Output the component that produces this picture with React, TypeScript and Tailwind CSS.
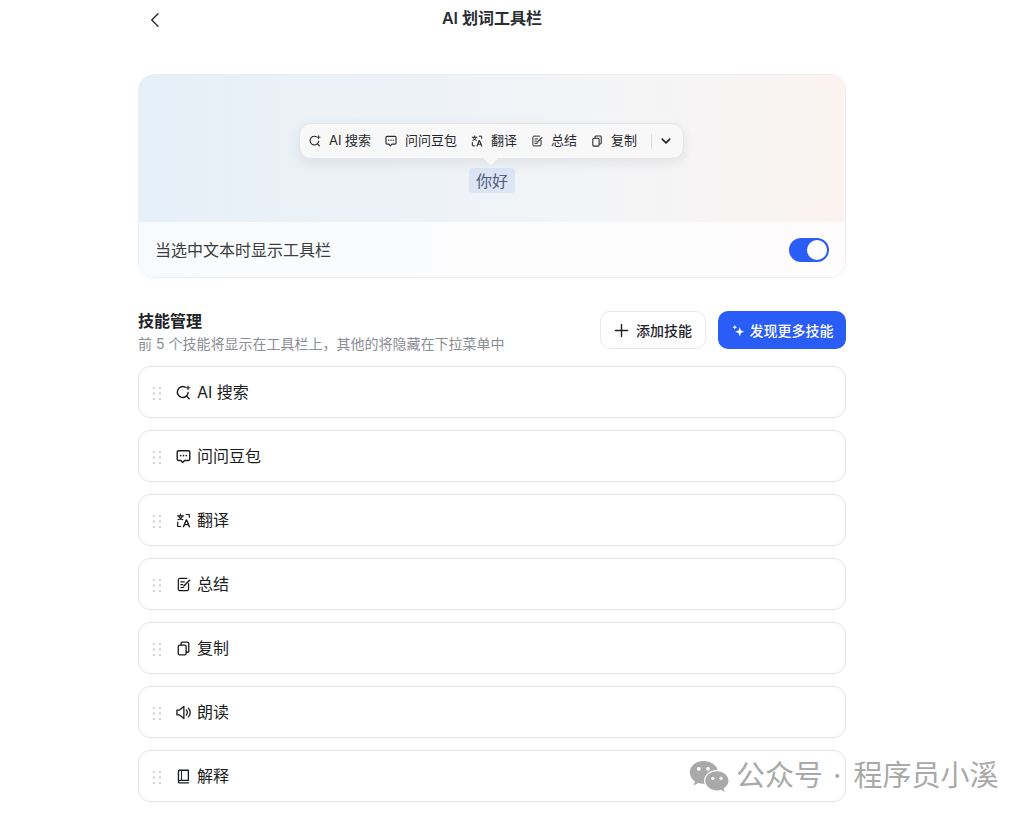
import React from "react";

const font = { fontFamily: 'Inter, "Noto Sans CJK SC", sans-serif' };

type IconProps = { className?: string };

const Svg = ({ className, children, sw = 1.5 }: IconProps & { children: React.ReactNode; sw?: number }) => (
  <svg viewBox="0 0 16 16" fill="none" stroke="currentColor" strokeWidth={sw} strokeLinecap="round" strokeLinejoin="round" className={className}>
    {children}
  </svg>
);

const SearchIcon = ({ className }: IconProps) => (
  <Svg className={className}>
    <path d="M9.800 2.300A5.800 5.800 0 1 0 13 8" />
    <path d="M11 11.400 14 14.600" />
    <path d="M12.800 1v3.800M10.900 2.900h3.800" strokeWidth={1.2} />
  </Svg>
);
const ChatIcon = ({ className }: IconProps) => (
  <Svg className={className}>
    <path d="M2.800 1.800h10.400a1.500 1.500 0 0 1 1.500 1.500v7.400a1.500 1.500 0 0 1-1.500 1.500H9.200l-2.200 2.300-1.700-2.300H2.800a1.500 1.500 0 0 1-1.500-1.500V3.300a1.500 1.500 0 0 1 1.500-1.500Z" />
    <path d="M5 7h.01M8 7h.01M11 7h.01" strokeWidth={1.8} />
  </Svg>
);
const TranslateIcon = ({ className }: IconProps) => (
  <Svg className={className} sw={1.3}>
    <path d="M1.600 3h6.400M4.800 1.200V3M2.800 3.400c.6 1.800 2 3 4.400 3.700M6.900 3.400C6.300 5.100 4.900 6.400 2.200 7.100" />
    <path d="M11 1.600h3.200v2.800M1.800 9.800v4.600H5" />
    <path d="M8 14.600 10.900 7.400h.4l3 7.200M9 12.400h4.400" strokeWidth={1.5} />
  </Svg>
);
const NoteIcon = ({ className }: IconProps) => (
  <Svg className={className} sw={1.3}>
    <path d="M13.400 7v6a1.500 1.500 0 0 1-1.500 1.500H4a1.500 1.500 0 0 1-1.500-1.500V3A1.500 1.500 0 0 1 4 1.500h7.500" />
    <path d="M5.200 5.200h3.600M5.200 8.200h2M5.200 11.200h3" />
    <path d="M8.400 9.600 14.400 3.400" strokeWidth={1.6} />
  </Svg>
);
const CopyIcon = ({ className }: IconProps) => (
  <Svg className={className} sw={1.4}>
    <rect x="2.400" y="4.400" width="8.400" height="10.400" rx="1.400" />
    <path d="M5.400 4.200V2.600a1.400 1.400 0 0 1 1.400-1.400h5.400a1.400 1.400 0 0 1 1.400 1.400v8.200a1.200 1.200 0 0 1-1.200 1.200h-1.400" />
  </Svg>
);
const SpeakerIcon = ({ className }: IconProps) => (
  <Svg className={className} sw={1.4}>
    <path d="M1 5.400v5.200h2.800l4.600 3.800V1.600L3.800 5.400H1Z" />
    <path d="M11 5.400a3.600 3.600 0 0 1 0 5.200M13.200 3.400a6.400 6.400 0 0 1 0 9.200" />
  </Svg>
);
const BookIcon = ({ className }: IconProps) => (
  <Svg className={className} sw={1.4}>
    <path d="M2.600 12.800V2.600a1.300 1.300 0 0 1 1.300-1.300h9.300v10.900H4.300a1.700 1.700 0 0 0-1.700 1.600 1.500 1.500 0 0 0 1.700 1h8.900" />
    <path d="M5.800 1.600v10.400" strokeWidth={1.100} />
  </Svg>
);

const Grip = () => (
  <svg viewBox="0 0 8 13" className="w-2 h-[13px] mt-[2px] text-[#c9cbd0]" fill="currentColor">
    {[1, 6.5, 12].flatMap((y) => [1, 7].map((x) => <rect key={`${x}-${y}`} x={x - 1} y={y - 1} width="2" height="2" rx="0.4" />))}
  </svg>
);

const toolbarItems = [
  { icon: SearchIcon, label: "AI 搜索", w: "w-[76px]" },
  { icon: ChatIcon, label: "问问豆包", w: "w-[86px]" },
  { icon: TranslateIcon, label: "翻译", w: "w-[60px]" },
  { icon: NoteIcon, label: "总结", w: "w-[60px]" },
  { icon: CopyIcon, label: "复制", w: "w-[60px]" },
];

const skills = [
  { icon: SearchIcon, label: "AI 搜索" },
  { icon: ChatIcon, label: "问问豆包" },
  { icon: TranslateIcon, label: "翻译" },
  { icon: NoteIcon, label: "总结" },
  { icon: CopyIcon, label: "复制" },
  { icon: SpeakerIcon, label: "朗读" },
  { icon: BookIcon, label: "解释" },
];

export default function App() {
  return (
    <div className="relative w-[1031px] h-[818px] bg-white overflow-hidden text-[#1a1c20]" style={font}>
      <div className="ml-[138px] w-[708px]">
        <header className="relative h-[36px] mb-[38px] flex items-center justify-center">
          <svg viewBox="0 0 16 16" className="absolute left-[9px] top-[12px] w-4 h-4 text-[#333]" fill="none" stroke="currentColor" strokeWidth="1.5" strokeLinecap="round" strokeLinejoin="round">
            <path d="M11 1.800 4.800 8l6.200 6.200" />
          </svg>
          <h1 className="text-[16px] leading-5 font-semibold text-[#2a2d33]">AI 划词工具栏</h1>
        </header>

        <section className="h-[204px] rounded-[16px] border border-[#eceef0] overflow-hidden flex flex-col">
          <div className="h-[147px] shrink-0 flex flex-col items-center pt-[48px] bg-[linear-gradient(90deg,#e6f0f8_0%,#edf2f7_40%,#f5f5f6_70%,#f8f4f3_90%,#fdf2f0_100%)]">
            <div className="relative w-[385px] mr-px h-[36px] rounded-[12px] border border-[#e4e5e8] bg-[#f8f8f8] shadow-[0_4px_12px_rgba(60,70,90,0.10)] flex items-center pl-[9px] text-[13px] text-[#26282d]">
              {toolbarItems.map(({ icon: Icon, label, w }) => (
                <div key={label} className={`flex items-center shrink-0 gap-2 ${w}`}>
                  <Icon className="w-3 h-3 shrink-0" />
                  <span className="whitespace-nowrap">{label}</span>
                </div>
              ))}
              <div className="w-px h-[15px] bg-[#dcdde0]" />
              <svg viewBox="0 0 16 16" className="w-3 h-3 ml-[8px]" fill="none" stroke="currentColor" strokeWidth="2.200" strokeLinecap="round" strokeLinejoin="round">
                <path d="M3 5.500 8 10.500l5-5" />
              </svg>
              <div className="absolute left-[183px] -bottom-[6px] w-[13px] h-[13px] rotate-45 bg-[#f8f8f8] scale-y-75" />
            </div>
            <div className="mt-[9px] w-[46px] h-[25px] rounded-[4px] bg-[#dbe5f5] flex items-center justify-center text-[16px] text-[#4f5d7c]">你好</div>
          </div>
          <div className="flex-1 flex items-center justify-between px-4 bg-[linear-gradient(90deg,#f8fbfd_0%,#fcfcfd_50%,#fefcfc_100%)]">
            <span className="text-[16px] text-[#3a3d42]">当选中文本时显示工具栏</span>
            <div className="w-10 h-6 rounded-full bg-[#2a5cf6] flex items-center justify-end pr-[2px]">
              <div className="w-5 h-5 rounded-full bg-white" />
            </div>
          </div>
        </section>

        <section className="mt-[33px] flex items-start justify-between">
          <div>
            <h2 className="text-[16px] leading-5 font-semibold text-[#1f2329]">技能管理</h2>
            <p className="mt-[3px] text-[14px] leading-[20px] text-[#8a8d93]">前 5 个技能将显示在工具栏上，其他的将隐藏在下拉菜单中</p>
          </div>
          <div className="flex gap-3">
            <button className="w-[106px] h-[38px] rounded-[10px] border border-[#e8e9ec] bg-white flex items-center justify-center gap-[7px] text-[14px] font-medium text-[#1f2329]">
              <svg viewBox="0 0 16 16" className="w-[15px] h-[15px]" fill="none" stroke="currentColor" strokeWidth="1.500" strokeLinecap="round">
                <path d="M8 1.500v13M1.500 8h13" />
              </svg>
              添加技能
            </button>
            <button className="w-[128px] h-[38px] rounded-[10px] bg-[#2a5cf6] flex items-center justify-center gap-[5px] pl-px text-[14px] font-medium text-white">
              <svg viewBox="0 0 16 16" className="w-[13px] h-[13px]" fill="currentColor">
                <path d="M9.500 4 11 8l4 1.500-4 1.500-1.500 4L8 11 4 9.500 8 8ZM3.500 1l.8 2.200 2.200.8-2.200.8-.8 2.200-.8-2.200L.5 4l2.200-.8Z" />
              </svg>
              发现更多技能
            </button>
          </div>
        </section>

        <ul className="mt-[12px] flex flex-col gap-3">
          {skills.map(({ icon: Icon, label }) => (
            <li key={label} className="h-[52px] rounded-[12px] border border-[#e4e5e8] bg-white flex items-center pl-[14px]">
              <Grip />
              <Icon className="ml-[15px] w-[15px] h-[15px] text-[#1a1c20]" />
              <span className="ml-[6px] text-[16px] text-[#1a1c20]">{label}</span>
            </li>
          ))}
        </ul>
      </div>

      <div className="absolute left-[689px] top-[758px] flex items-center text-[#a9a9a9] text-[29px] leading-9 whitespace-nowrap">
        <svg viewBox="0 0 40 32" className="w-[40px] h-[32px] mr-[7px]" fill="currentColor">
          <path d="M14.500 1C6.900 1 .8 6.100.8 12.400c0 3.600 2 6.800 5.200 8.900L4.700 25.500l4.800-2.600c1.600.5 3.300.8 5 .8h1a10 10 0 0 1-.4-2.800c0-6 5.700-10.800 12.600-10.800h1C27.200 4.700 21.400 1 14.500 1Z" />
          <path d="M39.500 20.800c0-5.300-5.200-9.600-11.600-9.600s-11.600 4.300-11.600 9.600 5.200 9.600 11.600 9.600c1.400 0 2.700-.2 3.900-.6l3.800 2.100-1-3.400c2.900-1.800 4.900-4.600 4.900-7.700Z" />
          <circle cx="9.800" cy="8.800" r="1.900" fill="#fff" />
          <circle cx="19" cy="8.800" r="1.900" fill="#fff" />
          <circle cx="23.800" cy="18.300" r="1.600" fill="#fff" />
          <circle cx="32" cy="18.300" r="1.600" fill="#fff" />
        </svg>
        <span>公众号</span>
        <span className="ml-[10px] mr-[12px]">·</span>
        <span>程序员小溪</span>
      </div>
    </div>
  );
}
